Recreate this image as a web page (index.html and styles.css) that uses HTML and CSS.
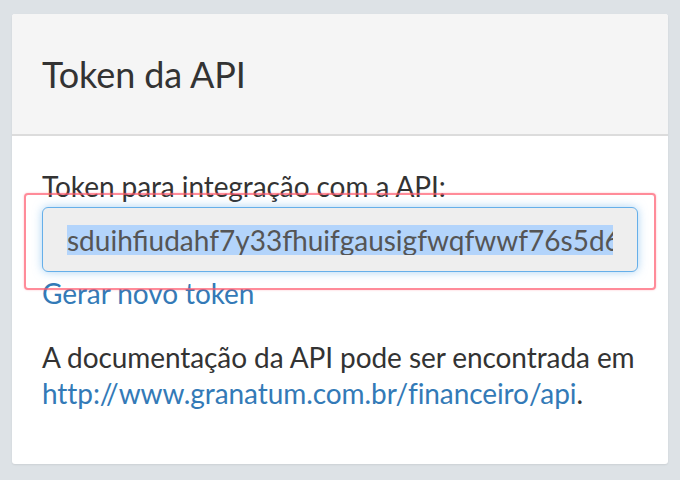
FILE: index.html
```html
<!DOCTYPE html>
<html lang="pt-BR">
<head>
<meta charset="utf-8">
<title>Token da API</title>
<link rel="stylesheet" href="styles.css">
</head>
<body>
<div class="card">
  <div class="card-header">
    <h3 class="card-title">Token da API</h3>
  </div>
  <div class="card-body">
    <label class="field-label">Token para integração com a API:</label>
    <div class="field-wrap">
      <div class="token-input"><div class="token-clip"><span class="token-sel">sduihfiudahf7y33fhuifgausigfwqfwwf76s5d6f7a8s9d0</span></div></div>
      <div class="highlight-box"></div>
    </div>
    <a class="link" href="#">Gerar novo token</a>
    <p class="doc">A documentação da API pode ser encontrada em<br><a class="link" href="#">http://www.granatum.com.br/financeiro/api</a>.</p>
  </div>
</div>
</body>
</html>
```
FILE: styles.css
```css
html, body {
  margin: 0;
  padding: 0;
}
body {
  background: #dde2e6;
  font-family: Lato, "Open Sans", sans-serif;
  color: #333;
  padding: 14px 12px 16px 12px;
  box-sizing: border-box;
  height: 480px;
}
.card {
  background: #fff;
  border-radius: 3px;
  box-shadow: 0 1px 2px rgba(0,0,0,0.08);
  height: 450px;
  overflow: hidden;
}
.card-header {
  background: #f5f5f5;
  height: 120px;
  border-bottom: 2px solid #dcdcdc;
  display: flex;
  align-items: center;
  padding: 0 30px;
}
.card-title {
  margin: 0;
  font-weight: 400;
  font-size: 36px;
  letter-spacing: -0.1px;
  color: #333;
}
.card-body {
  padding: 32px 20px 0 30px;
  font-size: 28px;
  line-height: 36px;
  letter-spacing: -0.08px;
}
.field-label {
  display: block;
  margin-bottom: 3px;
}
.field-wrap {
  position: relative;
  margin-bottom: 3px;
  margin-right: 10px;
}
.token-input {
  height: 65px;
  box-sizing: border-box;
  background: #eee;
  border: 1px solid #66afe9;
  border-radius: 6px;
  box-shadow: 0 0 10px rgba(102,175,233,0.55);
  padding: 0 24px;
  display: flex;
  align-items: center;
  color: #555;
  letter-spacing: 0;
}
.token-clip {
  overflow: hidden;
  white-space: nowrap;
  width: 100%;
  line-height: 30px;
}
.token-sel {
  background: #b3d4fb;
}
.highlight-box {
  position: absolute;
  left: -18px;
  right: -18px;
  top: -14px;
  bottom: -18px;
  border: 2px solid rgba(255,90,110,0.7);
  border-radius: 4px;
  box-shadow: 0 0 2px rgba(255,90,110,0.4);
  pointer-events: none;
}
.link {
  color: #337ab7;
  text-decoration: none;
}
.doc {
  margin: 28px 0 0 0;
  white-space: nowrap;
}
```
